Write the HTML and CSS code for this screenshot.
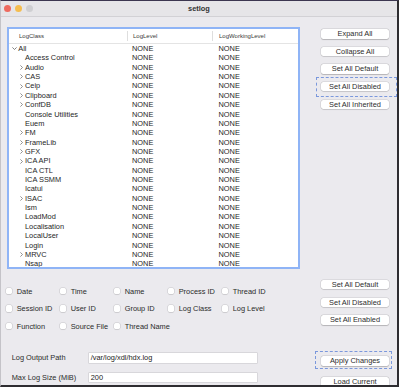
FILE: index.html
```html
<!DOCTYPE html>
<html>
<head>
<meta charset="utf-8">
<link rel="stylesheet" href="styles.css">
</head>
<body>
<div class="window">
  <div class="titlebar">
    <div class="lights"><span class="light red"></span><span class="light yellow"></span><span class="light gray"></span></div>
    <div class="title">setlog</div>
    <div></div>
  </div>
  <div class="section top">
    <div class="tree">
      <div class="thead">
        <div class="hc c1">LogClass</div>
        <div class="hc c2">LogLevel</div>
        <div class="hc c3">LogWorkingLevel</div>
      </div>
      <div class="rows">
        <div class="row"><div class="name l0"><span class="chev"><svg width="5" height="3" viewBox="0 0 5 3"><polyline points="0.4,0.4 2.5,2.5 4.6,0.4" fill="none" stroke="#666" stroke-width="0.8"/></svg></span>All</div><div class="lv">NONE</div><div class="wl">NONE</div></div>
        <div class="row"><div class="name l1"><span class="chev"></span>Access Control</div><div class="lv">NONE</div><div class="wl">NONE</div></div>
        <div class="row"><div class="name l1"><span class="chev"><svg width="3" height="5" viewBox="0 0 3 5"><polyline points="0.4,0.4 2.5,2.5 0.4,4.6" fill="none" stroke="#777" stroke-width="0.8"/></svg></span>Audio</div><div class="lv">NONE</div><div class="wl">NONE</div></div>
        <div class="row"><div class="name l1"><span class="chev"><svg width="3" height="5" viewBox="0 0 3 5"><polyline points="0.4,0.4 2.5,2.5 0.4,4.6" fill="none" stroke="#777" stroke-width="0.8"/></svg></span>CAS</div><div class="lv">NONE</div><div class="wl">NONE</div></div>
        <div class="row"><div class="name l1"><span class="chev"><svg width="3" height="5" viewBox="0 0 3 5"><polyline points="0.4,0.4 2.5,2.5 0.4,4.6" fill="none" stroke="#777" stroke-width="0.8"/></svg></span>Ceip</div><div class="lv">NONE</div><div class="wl">NONE</div></div>
        <div class="row"><div class="name l1"><span class="chev"><svg width="3" height="5" viewBox="0 0 3 5"><polyline points="0.4,0.4 2.5,2.5 0.4,4.6" fill="none" stroke="#777" stroke-width="0.8"/></svg></span>Clipboard</div><div class="lv">NONE</div><div class="wl">NONE</div></div>
        <div class="row"><div class="name l1"><span class="chev"><svg width="3" height="5" viewBox="0 0 3 5"><polyline points="0.4,0.4 2.5,2.5 0.4,4.6" fill="none" stroke="#777" stroke-width="0.8"/></svg></span>ConfDB</div><div class="lv">NONE</div><div class="wl">NONE</div></div>
        <div class="row"><div class="name l1"><span class="chev"></span>Console Utilities</div><div class="lv">NONE</div><div class="wl">NONE</div></div>
        <div class="row"><div class="name l1"><span class="chev"></span>Euem</div><div class="lv">NONE</div><div class="wl">NONE</div></div>
        <div class="row"><div class="name l1"><span class="chev"><svg width="3" height="5" viewBox="0 0 3 5"><polyline points="0.4,0.4 2.5,2.5 0.4,4.6" fill="none" stroke="#777" stroke-width="0.8"/></svg></span>FM</div><div class="lv">NONE</div><div class="wl">NONE</div></div>
        <div class="row"><div class="name l1"><span class="chev"><svg width="3" height="5" viewBox="0 0 3 5"><polyline points="0.4,0.4 2.5,2.5 0.4,4.6" fill="none" stroke="#777" stroke-width="0.8"/></svg></span>FrameLib</div><div class="lv">NONE</div><div class="wl">NONE</div></div>
        <div class="row"><div class="name l1"><span class="chev"><svg width="3" height="5" viewBox="0 0 3 5"><polyline points="0.4,0.4 2.5,2.5 0.4,4.6" fill="none" stroke="#777" stroke-width="0.8"/></svg></span>GFX</div><div class="lv">NONE</div><div class="wl">NONE</div></div>
        <div class="row"><div class="name l1"><span class="chev"><svg width="3" height="5" viewBox="0 0 3 5"><polyline points="0.4,0.4 2.5,2.5 0.4,4.6" fill="none" stroke="#777" stroke-width="0.8"/></svg></span>ICA API</div><div class="lv">NONE</div><div class="wl">NONE</div></div>
        <div class="row"><div class="name l1"><span class="chev"></span>ICA CTL</div><div class="lv">NONE</div><div class="wl">NONE</div></div>
        <div class="row"><div class="name l1"><span class="chev"></span>ICA SSMM</div><div class="lv">NONE</div><div class="wl">NONE</div></div>
        <div class="row"><div class="name l1"><span class="chev"></span>Icatui</div><div class="lv">NONE</div><div class="wl">NONE</div></div>
        <div class="row"><div class="name l1"><span class="chev"><svg width="3" height="5" viewBox="0 0 3 5"><polyline points="0.4,0.4 2.5,2.5 0.4,4.6" fill="none" stroke="#777" stroke-width="0.8"/></svg></span>ISAC</div><div class="lv">NONE</div><div class="wl">NONE</div></div>
        <div class="row"><div class="name l1"><span class="chev"></span>Ism</div><div class="lv">NONE</div><div class="wl">NONE</div></div>
        <div class="row"><div class="name l1"><span class="chev"></span>LoadMod</div><div class="lv">NONE</div><div class="wl">NONE</div></div>
        <div class="row"><div class="name l1"><span class="chev"></span>Localisation</div><div class="lv">NONE</div><div class="wl">NONE</div></div>
        <div class="row"><div class="name l1"><span class="chev"></span>LocalUser</div><div class="lv">NONE</div><div class="wl">NONE</div></div>
        <div class="row"><div class="name l1"><span class="chev"></span>Login</div><div class="lv">NONE</div><div class="wl">NONE</div></div>
        <div class="row"><div class="name l1"><span class="chev"><svg width="3" height="5" viewBox="0 0 3 5"><polyline points="0.4,0.4 2.5,2.5 0.4,4.6" fill="none" stroke="#777" stroke-width="0.8"/></svg></span>MRVC</div><div class="lv">NONE</div><div class="wl">NONE</div></div>
        <div class="row"><div class="name l1"><span class="chev"></span>Nsap</div><div class="lv">NONE</div><div class="wl">NONE</div></div>
      </div>
    </div>
    <div class="btncol btns-top">
      <div class="btn">Expand All</div>
      <div class="btn">Collapse All</div>
      <div class="btn">Set All Default</div>
      <div class="btn focus f1">Set All Disabled</div>
      <div class="btn">Set All Inherited</div>
    </div>
  </div>

  <div class="section mid">
    <div class="checks">
      <label class="chk"><span class="box"></span>Date</label>
      <label class="chk"><span class="box"></span>Time</label>
      <label class="chk"><span class="box"></span>Name</label>
      <label class="chk"><span class="box"></span>Process ID</label>
      <label class="chk"><span class="box"></span>Thread ID</label>
      <label class="chk"><span class="box"></span>Session ID</label>
      <label class="chk"><span class="box"></span>User ID</label>
      <label class="chk"><span class="box"></span>Group ID</label>
      <label class="chk"><span class="box"></span>Log Class</label>
      <label class="chk"><span class="box"></span>Log Level</label>
      <label class="chk"><span class="box"></span>Function</label>
      <label class="chk"><span class="box"></span>Source File</label>
      <label class="chk"><span class="box"></span>Thread Name</label>
    </div>
    <div class="btncol btns-mid">
      <div class="btn">Set All Default</div>
      <div class="btn">Set All Disabled</div>
      <div class="btn">Set All Enabled</div>
    </div>
  </div>

  <div class="section bot">
    <div class="fields">
      <div class="field"><span class="flabel">Log Output Path</span><span class="input">/var/log/xdl/hdx.log</span></div>
      <div class="field"><span class="flabel">Max Log Size (MiB)</span><span class="input">200</span></div>
    </div>
    <div class="btncol btns-bot">
      <div class="btn focus f2">Apply Changes</div>
      <div class="btn">Load Current</div>
    </div>
  </div>
</div>
</body>
</html>
```

FILE: styles.css
```css
* { box-sizing: border-box; }
html, body { margin: 0; padding: 0; }
body {
  font-family: "Liberation Sans", Arial, sans-serif;
  font-size: 7.4px;
  color: #262626;
  background: #ebeaee;
}
.window {
  width: 399px;
  height: 387px;
  overflow: hidden;
  background: #ebeaee;
  border-top: 1px solid #3c3650;
  border-left: 1px solid #c4c3c8;
  border-right: 2px solid #2e2d31;
  border-bottom: 2px solid #2e2d31;
  display: flex;
  flex-direction: column;
}
.titlebar {
  height: 16px;
  flex: none;
  display: grid;
  grid-template-columns: 1fr auto 1fr;
  align-items: center;
  background: #e6e5e8;
  border-bottom: 1px solid #d2d1d5;
  padding-bottom: 1px;
}
.lights { display: flex; gap: 4.3px; padding-left: 2.8px; }
.light { width: 7px; height: 7px; border-radius: 50%; display: block; }
.red { background: #ee6a5f; }
.yellow { background: #f5bd4f; }
.gray { background: #cfcfd2; }
.title { font-weight: bold; font-size: 7.4px; color: #333; }

.section { display: flex; justify-content: space-between; flex: none; }
.top { margin-top: 10px; padding-left: 6px; padding-right: 8px; }
.btncol { width: 68px; display: flex; flex-direction: column; gap: 8.2px; }
.btns-top { padding-top: 2.3px; }
.btn {
  position: relative;
  height: 9.4px;
  line-height: 9.4px;
  background: #fff;
  border-radius: 2.5px;
  text-align: center;
  color: #2c2c2c;
  font-size: 7.4px;
  box-shadow: 0 0 0 0.5px rgba(0,0,0,0.12), 0 0.6px 1px rgba(0,0,0,0.18);
  white-space: nowrap;
}
.focus::after {
  content: "";
  position: absolute;
  border: 1px dashed #7b98dc;
  pointer-events: none;
}
.f1::after { left: -4.7px; right: -7.7px; top: -4.6px; bottom: -5.7px; }
.f2::after { left: -6.5px; right: -2.6px; top: -4.8px; bottom: -3.3px; }

.tree {
  width: 293px;
  height: 242px;
  background: #fff;
  border: 2px solid #8fb4f6;
  overflow: hidden;
}
.thead {
  height: 15px;
  border-bottom: 1px solid #e4e4e4;
  display: grid;
  grid-template-columns: 118px 85px 1fr;
  align-items: center;
  font-size: 6px;
  color: #3a3a3a;
}
.hc { height: 10px; line-height: 10px; white-space: nowrap; }
.hc.c1 { padding-left: 10px; }
.hc.c2 { border-left: 1px solid #dedede; padding-left: 5px; }
.hc.c3 { border-left: 1px solid #dedede; padding-left: 6px; }

.row {
  height: 9.37px;
  line-height: 9.37px;
  display: grid;
  grid-template-columns: 118px 85px 1fr;
  white-space: nowrap;
}
.name { display: flex; align-items: center; }
.name.l0 { padding-left: 2px; }
.name.l1 { padding-left: 10px; }
.chev { display: flex; align-items: center; flex: none; }
.l0 .chev { width: 7.3px; padding-left: 0.5px; }
.l1 .chev { width: 6px; padding-left: 1px; }
.chev svg { display: block; }
.lv { padding-left: 5px; }
.wl { padding-left: 6.5px; }

.mid { padding-left: 5px; padding-right: 8px; height: 65.75px; }
.checks {
  margin-top: 13.25px;
  display: grid;
  grid-template-columns: repeat(5, 54px);
  grid-auto-rows: 17.5px;
  align-items: center;
  align-content: start;
}
.chk { display: flex; align-items: center; white-space: nowrap; color: #2a2a2a; }
.box {
  width: 6.3px;
  height: 6.3px;
  background: #fff;
  border-radius: 1.5px;
  margin-right: 4.4px;
  box-shadow: 0 0 0 0.5px rgba(0,0,0,0.14), 0 0.5px 0.8px rgba(0,0,0,0.12);
  flex: none;
}
.btns-mid { margin-top: 11px; }

.bot { padding-left: 10.7px; padding-right: 8px; }
.fields { padding-top: 18.55px; display: flex; flex-direction: column; gap: 10.3px; }
.field { display: grid; grid-template-columns: 77.3px 168px; align-items: center; height: 9.4px; }
.flabel { white-space: nowrap; color: #2a2a2a; }
.input {
  height: 9.4px;
  line-height: 9.4px;
  background: #fff;
  padding-left: 1.7px;
  box-shadow: 0 0 0 0.5px rgba(0,0,0,0.16);
  color: #222;
}
.btns-bot { padding-top: 21.4px; gap: 11.6px; }
```
